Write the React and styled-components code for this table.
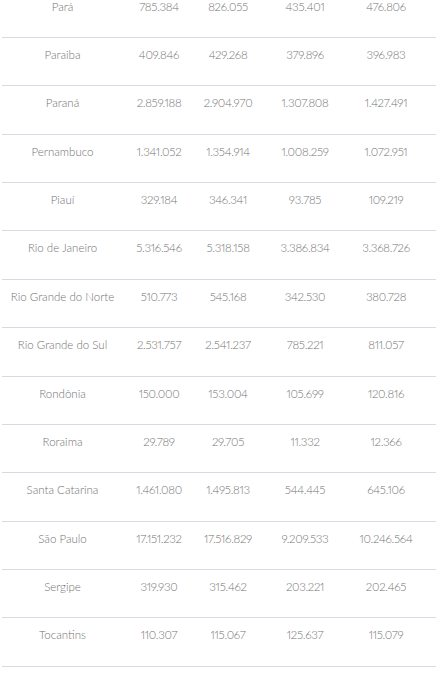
import React from 'react'
import styled, { createGlobalStyle } from 'styled-components'

const Global = createGlobalStyle`
  html, body {
    margin: 0;
    padding: 0;
    background: #ffffff;
  }
`

const rows = [
  ['Pará', '785.384', '826.055', '435.401', '476.806'],
  ['Paraiba', '409.846', '429.268', '379.896', '396.983'],
  ['Paraná', '2.859.188', '2.904.970', '1.307.808', '1.427.491'],
  ['Pernambuco', '1.341.052', '1.354.914', '1.008.259', '1.072.951'],
  ['Piauí', '329.184', '346.341', '93.785', '109.219'],
  ['Rio de Janeiro', '5.316.546', '5.318.158', '3.386.834', '3.368.726'],
  ['Rio Grande do Norte', '510.773', '545.168', '342.530', '380.728'],
  ['Rio Grande do Sul', '2.531.757', '2.541.237', '785.221', '811.057'],
  ['Rondônia', '150.000', '153.004', '105.699', '120.816'],
  ['Roraima', '29.789', '29.705', '11.332', '12.366'],
  ['Santa Catarina', '1.461.080', '1.495.813', '544.445', '645.106'],
  ['São Paulo', '17.151.232', '17.516.829', '9.209.533', '10.246.564'],
  ['Sergipe', '319.930', '315.462', '203.221', '202.465'],
  ['Tocantins', '110.307', '115.067', '125.637', '115.079'],
]

const Table = styled.div`
  width: 434px;
  margin: -10.4px 0 0 2px;
  font-family: Lato, 'Open Sans', sans-serif;
  font-weight: 300;
  font-size: 11.5px;
  color: #747474;
`

const Row = styled.div`
  display: grid;
  grid-template-columns: 121px 72px 66px 88px 74px 1fr;
  height: 48.38px;
  box-sizing: border-box;
  border-bottom: 1px solid #d3dce4;
`

const Cell = styled.div`
  text-align: center;
  white-space: nowrap;
  padding-top: 10px;
  line-height: 14px;
  font-variant-numeric: proportional-nums;
  letter-spacing: ${(p) => (p.$num ? '-0.3px' : '0')};
`

export default function App() {
  return (
    <>
      <Global />
      <Table>
        {rows.map((r) => (
          <Row key={r[0]}>
            {r.map((v, i) => (
              <Cell key={i} $num={i > 0}>
                {v}
              </Cell>
            ))}
            <span />
          </Row>
        ))}
      </Table>
    </>
  )
}
